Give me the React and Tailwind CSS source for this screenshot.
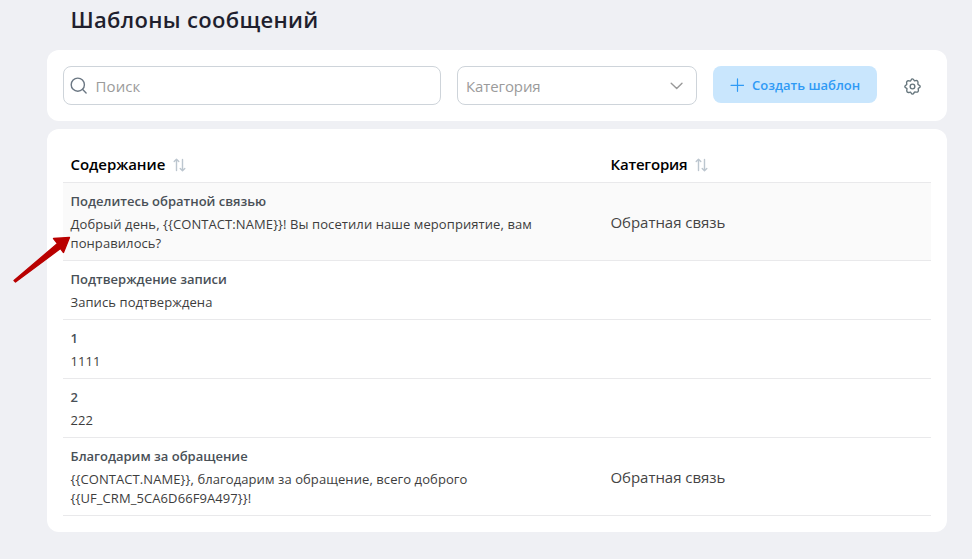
const SortIcon = () => (
  <svg width="14" height="14" viewBox="0 0 14 14" fill="none" stroke="#bcc6cf" strokeWidth="1.4" strokeLinecap="round" strokeLinejoin="round" className="shrink-0">
    <path d="M3.5 12.500V1.500M1.200 3.600L3.500 1.300L5.800 3.600M9.500 1.500v11M7.200 10.400l2.300 2.300l2.300-2.300" />
  </svg>
);

const SearchIcon = () => (
  <svg width="18" height="18" viewBox="0 0 18 18" fill="none" stroke="#6b7783" strokeWidth="1.4" strokeLinecap="round" className="shrink-0">
    <circle cx="7.8" cy="7.7" r="6.6" />
    <path d="M12.7 12.6l3.4 3.3" />
  </svg>
);

const GearIcon = () => (
  <svg width="17" height="17" viewBox="0 0 16 16" fill="none" stroke="#65757c" strokeWidth="1.3" strokeLinejoin="round" className="shrink-0">
    <circle cx="8" cy="8" r="2.2" />
    <path d="M8 .8C9.300.8 9.200 2.300 9.900 2.600S11.800 1.700 12.800 2.900S12.700 5.300 13.200 6.100S15.200 6.600 15.200 8S13.700 9.200 13.400 9.900S14.300 11.800 13.100 12.900S10.700 12.700 9.900 13.300S9.300 15.200 8 15.200S6.800 13.700 6.100 13.400S4.200 14.300 3 13.100S3.300 10.700 2.700 9.900S.8 9.300.8 8S2.300 6.800 2.600 6.100S1.700 4.200 2.900 3S5.300 3.300 6.100 2.700S6.600.8 8 .8Z" />
  </svg>
);

const rows = [
  {
    title: "Поделитесь обратной связью",
    lines: ["Добрый день, {{CONTACT:NAME}}! Вы посетили наше мероприятие, вам", "понравилось?"],
    category: "Обратная связь",
    active: true,
  },
  { title: "Подтверждение записи", lines: ["Запись подтверждена"] },
  { title: "1", lines: ["1111"] },
  { title: "2", lines: ["222"] },
  {
    title: "Благодарим за обращение",
    lines: ["{{CONTACT.NAME}}, благодарим за обращение, всего доброго", "{{UF_CRM_5CA6D66F9A497}}!"],
    category: "Обратная связь",
  },
];

export default function App() {
  return (
    <div className="relative h-[559px] w-[972px] overflow-hidden bg-[#eff0f4] font-['Open_Sans','Noto_Sans',sans-serif] whitespace-nowrap">
      <h1 className="flex h-[50px] items-start pt-[3px] pl-[70.5px] text-[22px] leading-8 font-semibold tracking-[0.32px] text-[#1f1f2e]">Шаблоны сообщений</h1>

      <div className="ml-[47px] flex h-[71px] w-[900px] items-start gap-4 rounded-xl bg-white p-4">
        <div className="flex h-[39px] w-[378px] items-center gap-[7.5px] rounded-lg border border-[#ced4da] pl-1.5">
          <SearchIcon />
          <span className="text-[15px] leading-5 tracking-[0.1px] text-[#9b9b9b]">Поиск</span>
        </div>
        <div className="flex h-[39px] w-[240px] items-center justify-between rounded-lg border border-[#ced4da] pr-3 pl-2">
          <span className="text-[15px] leading-5 tracking-[-0.1px] text-[#9b9b9b]">Категория</span>
          <svg width="14" height="14" viewBox="0 0 14 14" fill="none" stroke="#999" strokeWidth="1.4" strokeLinecap="round" strokeLinejoin="round">
            <path d="M1.200 4.200L6.700 9.600l5.300-5.400" />
          </svg>
        </div>
        <button className="flex h-[37px] w-[164px] items-center gap-2 rounded-lg bg-[#c9e6fd] pl-[17px] text-[13px] font-semibold text-[#2f9af5]">
          <svg width="14" height="14" viewBox="0 0 14 14" fill="none" stroke="#2f9af5" strokeWidth="1.2" strokeLinecap="round">
            <path d="M7.500 .9v12.400M1 7.300h12.600" />
          </svg>
          <span className="pt-0.5">Создать шаблон</span>
        </button>
        <div className="flex h-10 w-[38px] items-center justify-center">
          <GearIcon />
        </div>
      </div>

      <div className="mt-2 ml-[47px] h-[403px] w-[900px] rounded-xl bg-white p-4">
        <div className="grid h-[38px] grid-cols-[540px_1fr] items-center border-b border-[#e9e9eb] pt-0.5 pl-[7.5px] text-[15px] font-semibold text-black">
          <div className="flex items-center gap-2"><span className="tracking-[-0.05px]">Содержание</span><SortIcon /></div>
          <div className="flex items-center gap-2"><span className="tracking-[-0.2px]">Категория</span><SortIcon /></div>
        </div>
        {rows.map((row) => (
          <div key={row.title} className={`grid grid-cols-[540px_1fr] items-center border-b border-[#e9e9eb] pt-[9px] pb-[7px] pl-[7.5px] text-[#495057] ${row.active ? "bg-[#fafafa]" : ""}`}>
            <div>
              <div className="mb-1 text-[13px] leading-[19px] font-semibold">{row.title}</div>
              {row.lines.map((line) => (
                <div key={line} className="text-[13px] leading-[19px] tracking-[0.085px] text-[#3d3d3d]">{line}</div>
              ))}
            </div>
            <div className="pb-0.5 text-[15px] leading-5 tracking-[-0.05px] text-[#444]">{row.category}</div>
          </div>
        ))}
      </div>

      <svg className="absolute top-[230px] left-[8px]" width="66" height="56" viewBox="8 230 66 56">
        <path d="M14 280.500L57.500 243.500L53.500 238.500L69.500 237.500L63.500 252.500L60.500 248.500L15.500 282Z" fill="#b90000" stroke="#b90000" strokeWidth="1.3" strokeLinejoin="round" />
      </svg>
    </div>
  );
}
